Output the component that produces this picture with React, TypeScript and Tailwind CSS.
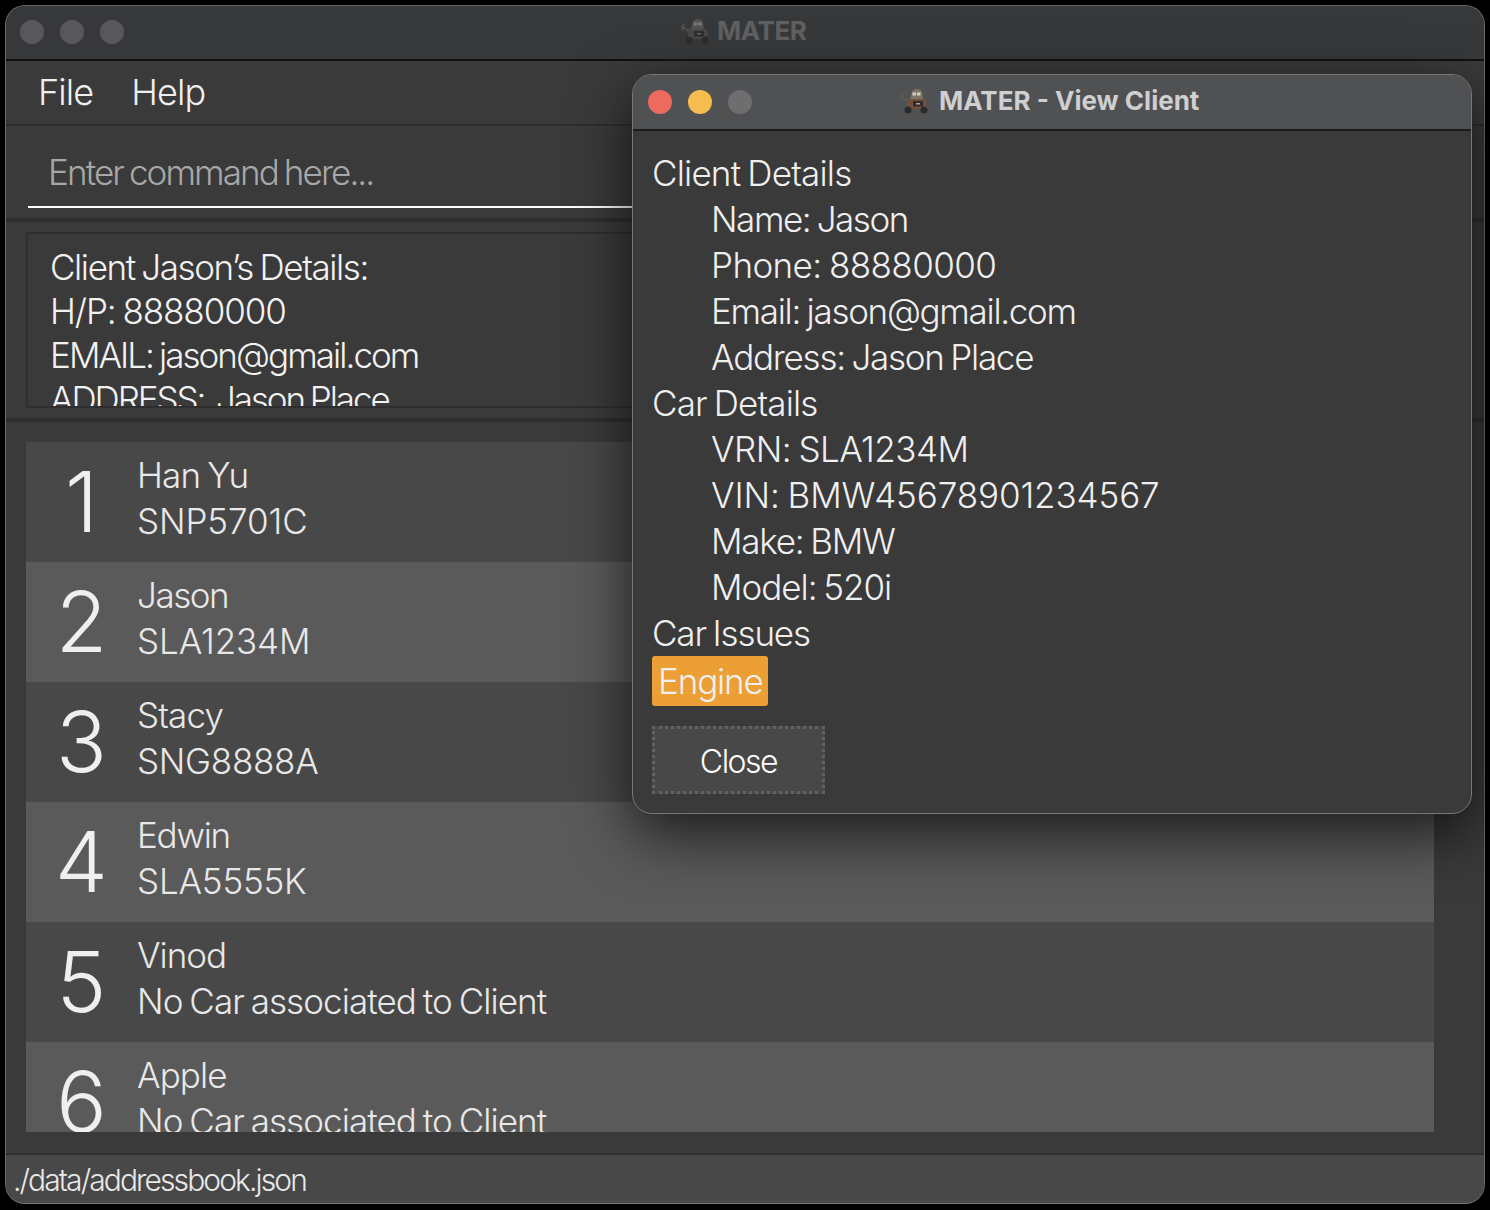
const clients = [
  { name: 'Han Yu', nameTrack: 'tracking-[-0.8px]', car: 'SNP5701C', carTrack: 'tracking-[-0.1px]' },
  { name: 'Jason', nameTrack: 'tracking-[-1.45px]', car: 'SLA1234M', carTrack: 'tracking-[-0.1px]' },
  { name: 'Stacy', nameTrack: 'tracking-[-0.85px]', car: 'SNG8888A', carTrack: 'tracking-[-0.3px]' },
  { name: 'Edwin', nameTrack: 'tracking-[-1.25px]', car: 'SLA5555K', carTrack: 'tracking-[-0.2px]' },
  { name: 'Vinod', nameTrack: 'tracking-[-1.05px]', car: 'No Car associated to Client', carTrack: 'tracking-[-0.94px]' },
  { name: 'Apple', nameTrack: 'tracking-[-0.9px]', car: 'No Car associated to Client', carTrack: 'tracking-[-0.94px]' },
];

const details = [
  { text: 'Client Details', track: 'tracking-[-0.81px]' },
  { text: 'Name: Jason', track: 'tracking-[-1.45px]', nested: true },
  { text: 'Phone: 88880000', track: 'tracking-[-0.58px]', nested: true },
  { text: 'Email: jason@gmail.com', track: 'tracking-[-1.3px]', nested: true },
  { text: 'Address: Jason Place', track: 'tracking-[-1.25px]', nested: true },
  { text: 'Car Details', track: 'tracking-[-0.85px]' },
  { text: 'VRN: SLA1234M', track: 'tracking-[-0.53px]', nested: true },
  { text: 'VIN: BMW45678901234567', track: 'tracking-[-0.1px]', nested: true },
  { text: 'Make: BMW', track: 'tracking-[-1.22px]', nested: true },
  { text: 'Model: 520i', track: 'tracking-[-1.03px]', nested: true },
  { text: 'Car Issues', track: 'tracking-[-1.15px]' },
];

function MaterIcon({ dim }: { dim?: boolean }) {
  return (
    <svg width="30" height="26" viewBox="0 0 30 26" className={dim ? 'opacity-80' : ''}>
      <path d="M1 8l9 6M4 6l-2 6" stroke={dim ? '#565656' : '#5e5a56'} strokeWidth="2" fill="none" />
      <path d="M11 11l2-7q1-3 5-3t5 3l1 7z" fill={dim ? '#5a5a5a' : '#7c7468'} />
      <rect x="13.5" y="4.5" width="3.5" height="3" fill={dim ? '#8c8c8c' : '#d4cfc2'} />
      <rect x="18" y="4.5" width="3.5" height="3" fill={dim ? '#8c8c8c' : '#d4cfc2'} />
      <path d="M8 11h19l1 10H8z" fill={dim ? '#4b4b4b' : '#70503e'} />
      <rect x="14" y="13" width="10" height="5.5" fill={dim ? '#2b2b2b' : '#33292a'} />
      <rect x="17" y="15" width="4" height="1.5" fill={dim ? '#707070' : '#b7a48c'} />
      <circle cx="9" cy="22" r="3.5" fill="#2a2a2a" />
      <circle cx="25" cy="22" r="3.5" fill="#2a2a2a" />
    </svg>
  );
}

function Lights({ active }: { active?: boolean }) {
  return (
    <div className="flex gap-4">
      <div className={`w-6 h-6 rounded-full ${active ? 'bg-[#ee6a5f]' : 'bg-[#59595b]'}`}></div>
      <div className={`w-6 h-6 rounded-full ${active ? 'bg-[#f5bd4f]' : 'bg-[#59595b]'}`}></div>
      <div className={`w-6 h-6 rounded-full ${active ? 'bg-[#6e6e70]' : 'bg-[#59595b]'}`}></div>
    </div>
  );
}

function ClientRow({ index, client }: { index: number; client: (typeof clients)[number] }) {
  return (
    <div className={`h-[120px] shrink-0 flex ${index % 2 === 0 ? 'bg-[#484848]' : 'bg-[#5a5a5a]'}`}>
      <div className="w-[111px] pt-[12px] text-center text-[84px] leading-[96px] font-light text-[#efefef]">
        {index + 1}
      </div>
      <div className="pt-[10px] text-[35px] leading-[46px] [word-spacing:-2px] font-light text-[#e8e8e8]">
        <div className={client.nameTrack}>{client.name}</div>
        <div className={client.carTrack}>{client.car}</div>
      </div>
    </div>
  );
}

export default function App() {
  return (
    <div className="relative w-[1490px] h-[1210px] bg-black p-[5px] font-['Inter',sans-serif] overflow-hidden">
      <div className="h-[1199px] flex flex-col rounded-[20px] overflow-hidden border border-[#6a6a6c] border-b-[#747474] bg-[#3a3a3a]">
        <div className="relative h-[55px] shrink-0 flex items-center pl-[14px] pb-[2px] border-b-2 border-[#111] bg-[#37383a]">
          <Lights />
          <div className="absolute left-[674px] top-[8px] flex items-center gap-[7px] text-[26px] tracking-[-0.4px] font-bold text-[#5f6062] leading-[34px]">
            <MaterIcon dim />
            <span>MATER</span>
          </div>
        </div>

        <div className="h-[65px] shrink-0 flex items-center gap-[38px] pl-[32px] pb-[2px] border-b-2 border-[#2e2e2e] text-[36px] tracking-[-0.9px] font-light text-[#efefef]">
          <span>File</span>
          <span>Help</span>
        </div>

        <div className="h-[96px] shrink-0 px-[22px] pt-[10px] border-b-4 border-[#2e2e2e]">
          <div className="h-[72px] border-b-2 border-white pl-[20px] pt-[14px] text-[35px] leading-[44px] tracking-[-1.9px] [word-spacing:-2px] font-light text-[#a8a8a8]">
            Enter command here...
          </div>
        </div>

        <div className="h-[200px] shrink-0 px-[20px] pt-[10px] border-b-4 border-[#2e2e2e]">
          <div className="h-[176px] border-2 border-[#2e2e2e] pl-[22px] pt-[11px] overflow-hidden text-[35px] leading-[44px] [word-spacing:-2px] font-light text-[#f2f2f2]">
            <div className="tracking-[-1.39px]">Client Jason’s Details:</div>
            <div className="tracking-[-1.08px]">H/P: 88880000</div>
            <div className="tracking-[-1.95px]">EMAIL: jason@gmail.com</div>
            <div className="tracking-[-2.08px]">ADDRESS:&nbsp; Jason Place</div>
          </div>
        </div>

        <div className="flex-1 min-h-0 pl-[20px] pr-[50px] pt-[20px] pb-[21px] bg-[#3a3a3a]">
          <div className="h-full flex flex-col overflow-hidden">
            {clients.map((c, i) => (
              <ClientRow key={c.name} index={i} client={c} />
            ))}
          </div>
        </div>

        <div className="h-[50px] shrink-0 border-t-2 border-[#2e2e2e] bg-[#484848] pl-[7px] pt-[5px] text-[30px] leading-[40px] tracking-[-1.9px] font-light text-[#e8e8e8]">
          ./data/addressbook.json
        </div>
      </div>

      <div className="absolute left-[632px] top-[74px] w-[840px] h-[740px] rounded-[20px] overflow-hidden border border-[#77777a] bg-[#3a3a3a] shadow-[0_20px_60px_rgba(0,0,0,0.7)]">
        <div className="relative h-[56px] flex items-center pl-[15px] border-b-2 border-[#1a1a1a] bg-[#505153]">
          <Lights active />
          <div className="absolute left-[266px] top-[9px] flex items-center gap-[10px] text-[26px] font-bold text-[#cfcfd1] leading-[34px]">
            <MaterIcon />
            <span>MATER - View Client</span>
          </div>
        </div>

        <div className="pl-[19px] pt-[19px] text-[35px] leading-[46px] [word-spacing:-2px] font-light text-[#efefef]">
          {details.map((line) => (
            <div key={line.text} className={`${line.track} ${line.nested ? 'pl-[59px]' : ''}`}>
              {line.text}
            </div>
          ))}
          <div className="w-[116px] h-[50px] rounded-[3px] bg-[#eb9f35] px-[6px] leading-[50px] tracking-[-1.15px] text-[#f0f0f0]">
            Engine
          </div>
          <div className="mt-[20px] w-[173px] h-[68px] pt-[3px] flex items-center justify-center bg-[#484848] border-[3px] border-dotted border-[#626262] text-[32px] tracking-[-1.5px] text-white font-light">
            Close
          </div>
        </div>
      </div>
    </div>
  );
}
